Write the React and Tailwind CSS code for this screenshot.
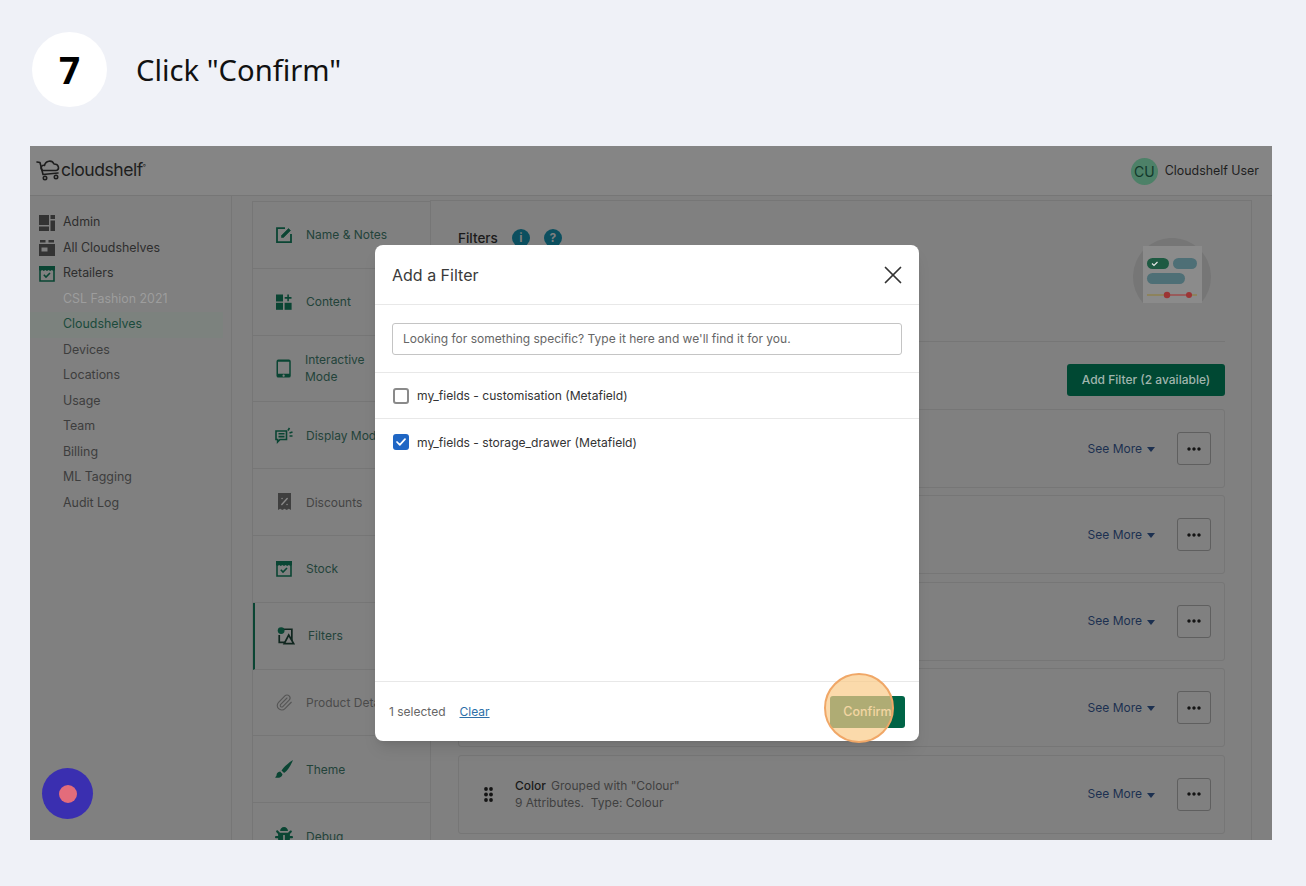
import { X, Paperclip } from "lucide-react";
import { MdOutlineTabletMac, MdMoreHoriz } from "react-icons/md";
import { FaBug } from "react-icons/fa";

const font = { fontFamily: "Inter, sans-serif" };

const Logo = () => (
    <svg width="25" height="22" viewBox="0 0 25 22" fill="none" stroke="#1e1e1e" strokeWidth="1.6" strokeLinecap="round" strokeLinejoin="round">
        <path d="M1 3 L4 3.5 L7 15.5 L22 14" />
        <path d="M6.5 11.5 C3.5 9 6 5.5 8.5 6.5 C9.5 1.5 16 0.5 18 5 C23 5 24 10.5 20 11.5 Z" />
        <circle cx="9" cy="19" r="1.7" />
        <circle cx="20" cy="18" r="1.7" />
    </svg>
);

const AdminIcon = () => (
    <svg width="16" height="16" viewBox="0 0 16 16" fill="#333">
        <rect x="0" y="0" width="10" height="10" />
        <rect x="11.5" y="0" width="4.5" height="4" />
        <rect x="11.5" y="5.5" width="4.5" height="10.5" />
        <rect x="0" y="11.5" width="10" height="4.5" />
    </svg>
);

const ShelfIcon = () => (
    <svg width="16" height="16" viewBox="0 0 16 16" fill="#333">
        <rect x="1" y="0" width="5.5" height="2.5" />
        <rect x="9.5" y="0" width="5.5" height="2.5" />
        <path d="M0 4h16v12H0z M2.5 7.5v4h6v-4z" fillRule="evenodd" />
    </svg>
);

const StoreIcon = ({ color = "#0a4533" }) => (
    <svg width="16" height="16" viewBox="0 0 16 16" fill="none">
        <path d="M0 0h16v4l-1.6 1-1.6-1-1.6 1-1.6-1-1.6 1-1.6-1-1.6 1-1.6-1-1.6 1L0 4z" fill={color} />
        <path d="M1 4v11h14V4" stroke={color} strokeWidth="1.6" />
        <path d="M4.8 8.8l2.2 2.2 4-4" stroke={color} strokeWidth="1.6" />
    </svg>
);

const NotesIcon = () => (
    <svg width="17" height="17" viewBox="0 0 17 17" fill="none" stroke="#0a4533" strokeWidth="1.8">
        <path d="M9 2.2H1v14h14V8" />
        <path d="M5.5 11.5v-2L12.5 2.5l2 2L7.5 11.5z" fill="#0a4533" strokeWidth="0.6" />
    </svg>
);

const ContentIcon = () => (
    <svg width="16" height="16" viewBox="0 0 16 16" fill="#0a4533">
        <rect x="0" y="0.5" width="7" height="7" />
        <rect x="0" y="8.8" width="7" height="7" />
        <rect x="8.6" y="8.8" width="7" height="7" />
        <path d="M11.3 0.5h1.6v2.6h2.6v1.6h-2.6v2.6h-1.6V4.7H8.7V3.1h2.6z" />
    </svg>
);

const DisplayIcon = () => (
    <svg width="18" height="17" viewBox="0 0 18 17" fill="none" stroke="#0a4533" strokeWidth="1.6">
        <path d="M1 4h10.5v8.5H5L2.6 15v-2.5H1z" />
        <path d="M3.5 6.8h6M3.5 9.6h6" />
        <path d="M13 3.5l1.5-2.5M14.5 6l3-1M14.5 9h3" />
    </svg>
);

const DiscountIcon = () => (
    <svg width="13" height="18" viewBox="0 0 13 18" fill="#3f3f3f">
        <path d="M0 0h13v17l-2.2-1.2-2.1 1.2-2.2-1.2-2.2 1.2-2.1-1.2L0 17z" />
        <path d="M3.8 11.5l5.4-6M4 5.5h.1M9 11.5h.1" stroke="#8a8a8a" strokeWidth="1.4" strokeLinecap="round" />
    </svg>
);

const FiltersIcon = () => (
    <svg width="20" height="20" viewBox="0 0 20 20" fill="none" stroke="#10261f" strokeWidth="1.9">
        <path d="M5 2.5h11.5v14.5H2.5V9" />
        <circle cx="4.6" cy="4" r="3.8" fill="#0a4533" stroke="none" />
        <path d="M8 18.5l5-9.5 5.5 9.5z" fill="#7f7f7f" />
    </svg>
);

const BrushIcon = () => (
    <svg width="18" height="18" viewBox="0 0 18 18" fill="#0a4533">
        <path d="M18 0C14 2.5 9 6.5 6.5 10.5l2.6 2.4C13 10.5 16 5 18 0z" />
        <path d="M5.2 11.5c-2.4.2-3.6 1.8-3.6 3.3 0 1.2-.6 2-1.6 2.6 2.6.9 7 .5 7.5-3.2z" />
    </svg>
);

const tabs = [
    { label: "Name & Notes", icon: <NotesIcon />, color: "text-[#23433a]" },
    { label: "Content", icon: <ContentIcon />, color: "text-[#23433a]" },
    { label: "Interactive Mode", icon: <MdOutlineTabletMac className="text-[#0a4533] text-[19px]" />, color: "text-[#23433a]", tall: true },
    { label: "Display Mode", icon: <DisplayIcon />, color: "text-[#23433a]" },
    { label: "Discounts", icon: <DiscountIcon />, color: "text-[#444]" },
    { label: "Stock", icon: <StoreIcon />, color: "text-[#23433a]" },
    { label: "Filters", icon: <FiltersIcon />, color: "text-[#23433a]", active: true },
    { label: "Product Details", icon: <Paperclip size={19} strokeWidth={1.5} className="text-[#555]" />, color: "text-[#4b4b4b]" },
    { label: "Theme", icon: <BrushIcon />, color: "text-[#23433a]" },
    { label: "Debug", icon: <FaBug className="text-[#0a4533] text-[18px]" />, color: "text-[#23433a]" },
];

const sideItems = ["CSL Fashion 2021", "Cloudshelves", "Devices", "Locations", "Usage", "Team", "Billing", "ML Tagging", "Audit Log"];

const filterRows = [{}, {}, {}, {}, { name: "Color", group: 'Grouped with "Colour"', info: "9 Attributes.  Type: Colour" }];

const Sidebar = () => (
    <div className="w-[202px] shrink-0 border-r border-[#767676] px-2 pt-[14px] h-full">
        <div className="flex flex-col text-[12.4px] text-[#2e2e2e]">
            <div className="flex items-center h-[25.5px] gap-[8px] pl-[1px]"><AdminIcon />Admin</div>
            <div className="flex items-center h-[25.5px] gap-[8px] pl-[1px]"><ShelfIcon />All Cloudshelves</div>
            <div className="flex items-center h-[25.5px] gap-[8px] pl-[1px]"><StoreIcon />Retailers</div>
            {sideItems.map((item) => (
                <div
                    key={item}
                    className={
                        "flex items-center h-[25.5px] pl-[25px] -ml-[8px] " +
                        (item === "CSL Fashion 2021" ? "text-[#9d9d9d] " : item === "Cloudshelves" ? "text-[#1a4a3b] bg-[#7c827e] " : "text-[#3d3d3d] ")
                    }
                >
                    <span className="pl-[8px]">{item}</span>
                </div>
            ))}
        </div>
    </div>
);

const TabColumn = () => (
    <div className="w-[179px] shrink-0 ml-[20px] border-x border-t border-[#767676] mt-[5px] flex flex-col text-[12px]">
        {tabs.map((tab) => (
            <div
                key={tab.label}
                className={
                    "h-[66.8px] shrink-0 flex items-center border-b border-[#767676] pl-[22px] gap-[13px] " +
                    (tab.active ? "border-l-2 border-l-[#0a4533] " : "")
                }
            >
                <span className="w-[18px] flex justify-center shrink-0">{tab.icon}</span>
                <span className={tab.color + " leading-[17px] " + (tab.tall ? "w-[66px] -ml-px" : "whitespace-nowrap")}>{tab.label}</span>
            </div>
        ))}
    </div>
);

const Illustration = () => (
    <svg width="80" height="65" viewBox="0 0 80 65">
        <path d="M11 65 A39 39 0 1 1 69 65 Z" fill="#767676" />
        <rect x="11" y="8" width="59" height="57" fill="#8b8b8b" />
        <rect x="15" y="20" width="22" height="11" rx="5.5" fill="#1e5a42" />
        <path d="M20 25.5l2 2 3.5-3.5" stroke="#e5e5e5" strokeWidth="1.2" fill="none" />
        <rect x="41" y="20" width="24" height="11" rx="5.5" fill="#4e6f76" />
        <rect x="15" y="35" width="38" height="11" rx="5.5" fill="#4e6f76" />
        <path d="M15 57h20" stroke="#8f7f3f" strokeWidth="1.2" />
        <path d="M35 57h22" stroke="#a33b3b" strokeWidth="1.2" />
        <path d="M57 57h8" stroke="#8f7f3f" strokeWidth="1.2" />
        <circle cx="35" cy="57" r="3.2" fill="#9c3535" />
        <circle cx="57" cy="57" r="3" fill="#9c3535" />
    </svg>
);

const DragDots = () => (
    <svg width="9" height="15" viewBox="0 0 9 15" fill="#141414" className="shrink-0">
        <circle cx="2" cy="2" r="1.9" />
        <circle cx="7" cy="2" r="1.9" />
        <circle cx="2" cy="7.5" r="1.9" />
        <circle cx="7" cy="7.5" r="1.9" />
        <circle cx="2" cy="13" r="1.9" />
        <circle cx="7" cy="13" r="1.9" />
    </svg>
);

const FilterRow = ({ row }) => (
    <div className="h-[79px] shrink-0 border border-[#767676] rounded-[3px] flex items-center pl-[25px] pr-[13px]">
        <DragDots />
        <div className="ml-[22px] text-[12px] leading-[17px] text-[#404040]">
            {row.name && (
                <>
                    <div><span className="font-medium text-[#1a1a1a] mr-[5px]">{row.name}</span>{row.group}</div>
                    <div className="whitespace-pre">{row.info}</div>
                </>
            )}
        </div>
        <div className="ml-auto flex items-center text-[12px] text-[#1c3050]">
            See More
            <svg width="8" height="5" viewBox="0 0 8 5" className="ml-[5px] mt-[2px]"><path d="M0 0h8L4 5z" fill="#1c3050" /></svg>
        </div>
        <div className="ml-[22px] w-[34px] h-[33px] border border-[#5f5f5f] rounded-[3px] flex items-center justify-center">
            <MdMoreHoriz className="text-[#141414] text-[20px]" />
        </div>
    </div>
);

const MainCard = () => (
    <div className="w-[822px] shrink-0 -ml-px border-x border-t border-[#767676] mt-[4px] pl-[27px] pr-[26px] pt-[27px]">
        <div className="h-[114px] border-b border-[#767676] flex items-start justify-between">
            <div className="flex items-center text-[13.5px] font-medium text-[#1a1a1a]">
                Filters
                <span className="ml-[14px] w-[18px] h-[18px] rounded-full bg-[#0c4f5f] text-[#7f7f7f] text-[12px] font-bold flex items-center justify-center">i</span>
                <span className="ml-[14px] w-[18px] h-[18px] rounded-full bg-[#0c4f5f] text-[#7f7f7f] text-[12px] font-bold flex items-center justify-center">?</span>
            </div>
            <div className="mr-[13px] mt-[10px]"><Illustration /></div>
        </div>
        <div className="flex justify-end pt-[22px]">
            <div className="w-[158px] h-[32px] rounded-[3px] bg-[#004833] text-[#a0b5ae] text-[12px] font-medium flex items-center justify-center">Add Filter (2 available)</div>
        </div>
        <div className="mt-[13px] flex flex-col gap-[7.4px]">
            {filterRows.map((row, i) => <FilterRow key={i} row={row} />)}
        </div>
    </div>
);

const Checkbox = ({ checked }) => (
    checked ? (
        <span className="w-[16px] h-[16px] rounded-[3px] bg-[#1f66c4] flex items-center justify-center">
            <svg width="10" height="8" viewBox="0 0 10 8" fill="none" stroke="#fff" strokeWidth="1.7" strokeLinecap="round" strokeLinejoin="round"><path d="M1 4l2.8 2.8L9 1.2" /></svg>
        </span>
    ) : (
        <span className="w-[16px] h-[16px] rounded-[3px] border-2 border-[#8a8a8a] bg-white" />
    )
);

const Modal = () => (
    <div className="absolute left-[345px] top-[99px] w-[544px] h-[496px] bg-white rounded-[8px] shadow-lg flex flex-col">
        <div className="h-[60px] shrink-0 border-b border-[#e8e8e8] flex items-center justify-between pl-[17px] pr-[11px]">
            <span className="text-[16px] text-[#3a3a3a] pt-[1px]">Add a Filter</span>
            <X size={30} strokeWidth={1.4} className="text-[#333]" />
        </div>
        <div className="h-[68px] shrink-0 border-b border-[#e8e8e8] flex items-center px-[17px]">
            <div className="w-full h-[32px] border border-[#c4c4c4] rounded-[3px] flex items-center pl-[10px] text-[12px] text-[#666]">
                Looking for something specific? Type it here and we'll find it for you.
            </div>
        </div>
        <div className="h-[46px] shrink-0 border-b border-[#e8e8e8] flex items-center pl-[18px] gap-[8px] text-[12.1px] text-[#333]">
            <Checkbox /><span className="pt-[1px]">my_fields - customisation (Metafield)</span>
        </div>
        <div className="h-[46px] shrink-0 flex items-center pl-[18px] gap-[8px] text-[12.1px] text-[#333]">
            <Checkbox checked /><span className="pt-[2px]">my_fields - storage_drawer (Metafield)</span>
        </div>
        <div className="flex-1" />
        <div className="h-[60px] shrink-0 border-t border-[#e8e8e8] flex items-center px-[14px] text-[12px]">
            <span className="text-[#666] pt-[1px]">1 selected</span>
            <span className="ml-[14px] text-[#2d6fa8] underline pt-[1px]">Clear</span>
            <div className="ml-auto w-[75px] h-[32px] rounded-[3px] bg-[#006446] text-[#e6efe0] text-[12.5px] font-medium flex items-center justify-center pt-[1px]">Confirm</div>
        </div>
    </div>
);

export default function App() {
    return (
        <div className="w-[1306px] h-[886px] bg-[#eff1f7] pt-8 overflow-hidden" style={font}>
            <div className="flex items-center pl-8">
                <div className="w-[75px] h-[75px] rounded-full bg-white flex items-center justify-center text-[37px] font-bold text-black" style={{ fontFamily: '"Noto Sans", sans-serif' }}>7</div>
                <div className="ml-[29px] pt-[2px] text-[29.2px] text-[#111]" style={{ fontFamily: '"Noto Sans", sans-serif' }}>Click "Confirm"</div>
            </div>
            <div className="relative mt-[39px] ml-[30px] w-[1242px] h-[694px] bg-[#808080] overflow-hidden">
                <div className="h-[50px] bg-[#858585] border-b border-[#767676] flex items-center justify-between pl-[6px] pr-[13px]">
                    <div className="flex items-center">
                        <Logo />
                        <span className="text-[17.6px] text-[#1e1e1e] tracking-[-0.5px]">cloudshelf</span>
                        <span className="text-[7px] text-[#1e1e1e] self-start mt-[6px]">°</span>
                    </div>
                    <div className="flex items-center gap-[7px] text-[12.4px] text-[#1e1e1e] pt-[1px]">
                        <span className="w-[27px] h-[27px] rounded-full bg-[#4d8168] text-[#12382b] text-[14px] flex items-center justify-center">CU</span>
                        Cloudshelf User
                    </div>
                </div>
                <div className="flex h-[644px]">
                    <Sidebar />
                    <TabColumn />
                    <MainCard />
                </div>
                <div className="absolute left-[12px] top-[622px] w-[51px] h-[51px] rounded-full bg-[#3a2fb0] flex items-center justify-center">
                    <span className="w-[18px] h-[18px] rounded-full bg-[#e36c7b]" />
                </div>
                <Modal />
                <div className="absolute left-[794px] top-[527px] w-[70px] h-[70px] rounded-full bg-[#facb88]/70 border-2 border-[#f0a767]" />
            </div>
        </div>
    );
}
